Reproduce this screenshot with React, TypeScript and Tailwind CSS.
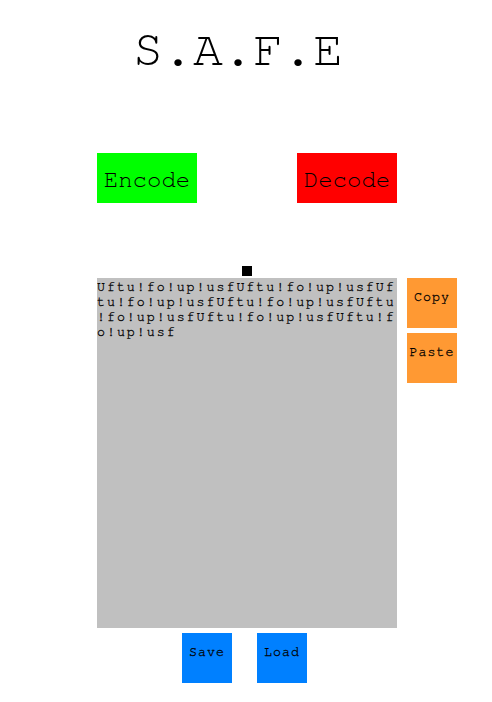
import React, { useState } from "react";

const App = () => {
  const [text, setText] = useState("Uftu!fo!up!usf".repeat(7));

  return (
    <div className="w-[492px] h-[702px] bg-white text-black font-['FreeMono',monospace]">
      {/* Title */}
      <h1 className="pt-[22px] pr-[16px] text-center text-[50px] leading-[56px] font-normal">
        S.A.F.E
      </h1>

      {/* Mode buttons */}
      <div className="mt-[75px] ml-[97px] w-[300px] flex justify-between">
        <button className="w-[100px] h-[50px] bg-[#00ff00] text-2xl pt-[3px]">Encode</button>
        <button className="w-[100px] h-[50px] bg-[#ff0000] text-2xl pt-[3px]">Decode</button>
      </div>

      {/* Editor */}
      <div className="mt-[63px] ml-[97px] flex gap-[10px]">
        <div className="w-[300px] flex flex-col items-center">
          <div className="w-[10px] h-[10px] bg-black mb-[2px]"></div>
          <textarea
            value={text}
            onChange={(e) => setText(e.target.value)}
            spellCheck={false}
            className="w-[300px] h-[350px] bg-[#c0c0c0] p-0 pt-[2px] resize-none outline-none font-['FreeMono',monospace] text-[13.3333px] leading-[15px] tracking-[1.96px] break-all [line-break:anywhere] text-black [-webkit-text-stroke:0.3px_black]"
          />
        </div>
        <div className="mt-[12px] flex flex-col gap-[5px]">
          <button className="w-[50px] h-[50px] bg-[#ff9933] text-[13.3333px] tracking-[1px] pb-[10px] [-webkit-text-stroke:0.3px_black]">Copy</button>
          <button className="w-[50px] h-[50px] bg-[#ff9933] text-[13.3333px] tracking-[1px] pb-[10px] [-webkit-text-stroke:0.3px_black]">Paste</button>
        </div>
      </div>

      {/* File buttons */}
      <div className="mt-[5px] ml-[182px] flex gap-[25px]">
        <button className="w-[50px] h-[50px] bg-[#0080ff] text-[13.3333px] tracking-[1px] pb-[10px] [-webkit-text-stroke:0.3px_black]">Save</button>
        <button className="w-[50px] h-[50px] bg-[#0080ff] text-[13.3333px] tracking-[1px] pb-[10px] [-webkit-text-stroke:0.3px_black]">Load</button>
      </div>
    </div>
  );
};

export default App;
